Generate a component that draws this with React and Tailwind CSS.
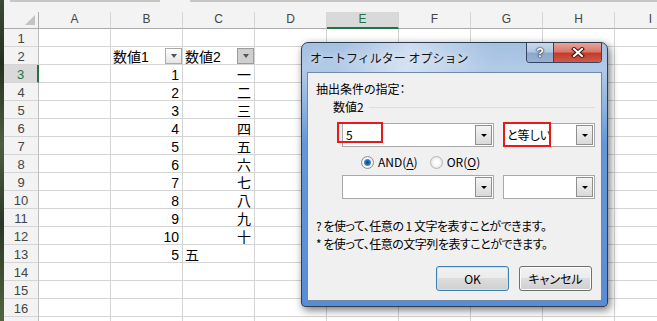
import React from 'react';

const COLS = ['A', 'B', 'C', 'D', 'E', 'F', 'G', 'H', 'I'];

// values in columns B and C, keyed by row number
const DATA = {
  2: ['数値1', '数値2'],
  3: ['1', '一'],
  4: ['2', '二'],
  5: ['3', '三'],
  6: ['4', '四'],
  7: ['5', '五'],
  8: ['6', '六'],
  9: ['7', '七'],
  10: ['8', '八'],
  11: ['9', '九'],
  12: ['10', '十'],
  13: ['5', '五'],
};

const ROWS = Array.from({ length: 17 }, (_, i) => i + 1);

const FilterButton = ({ active = false }) => (
  <span
    className={`absolute right-0 top-[1px] w-[17px] h-[16px] border flex items-center justify-center ${
      active
        ? 'bg-[#cfcfcf] border-[#9c9c9c]'
        : 'bg-[linear-gradient(#ffffff,#e4e4e4)] border-[#ababab]'
    }`}
  >
    <span className="w-0 h-0 border-l-[3px] border-r-[3px] border-t-[4px] border-l-transparent border-r-transparent border-t-[#555555]" />
  </span>
);

const SheetCell = ({ row, col }) => {
  const values = DATA[row];
  let content = null;

  if (values && (col === 'B' || col === 'C')) {
    const text = col === 'B' ? values[0] : values[1];
    const isHeader = row === 2;
    const leftAligned = isHeader || (row === 13 && col === 'C');
    content = (
      <>
        <span
          className={`block leading-[17px] pt-[2px] whitespace-nowrap ${
            leftAligned ? 'pl-[2px] text-left' : 'pr-[3px] text-right'
          }`}
        >
          {text}
        </span>
        {isHeader && <FilterButton active={col === 'C'} />}
      </>
    );
  }

  return (
    <div className="relative w-[72px] h-[18px] shrink-0 border-r border-b border-[#d4d4d4] text-[14px] text-black">
      {content}
    </div>
  );
};

const Sheet = () => (
  <div className="flex-1 flex flex-col bg-white font-['Liberation_Sans','Noto_Sans_CJK_JP',sans-serif] overflow-hidden">
    {/* bottom edge of the formula bar */}
    <div className="h-[12px] shrink-0 bg-[#f3f3f3]">
      <div className="flex h-[2px]">
        <div className="w-[6px]" />
        <div className="w-[150px] bg-[#c6c6c6]" />
        <div className="w-[30px]" />
        <div className="flex-1 bg-[#c6c6c6]" />
      </div>
    </div>

    {/* column headers */}
    <div className="flex h-[17px] shrink-0 bg-[#f3f3f3]">
      <div className="relative w-[35px] shrink-0 border-r border-b border-[#ababab]">
        <svg className="absolute right-[3px] bottom-[3px]" width="10" height="10" viewBox="0 0 10 10">
          <polygon points="10,0 10,10 0,10" fill="#c3c3c3" />
        </svg>
      </div>
      {COLS.map((c) => (
        <div
          key={c}
          className={`w-[72px] shrink-0 border-r border-[#d5d5d5] text-center text-[12px] leading-[15px] ${
            c === 'E'
              ? 'bg-[#d9d9d9] text-[#217346] border-b-2 border-b-[#217346]'
              : 'text-[#444444] border-b border-b-[#ababab]'
          }`}
        >
          {c}
        </div>
      ))}
    </div>

    {ROWS.map((r) => (
      <div key={r} className="flex h-[18px] shrink-0">
        <div
          className={`w-[35px] shrink-0 border-b border-b-[#d4d4d4] text-center text-[13px] leading-[17px] pt-[1px] ${
            r === 3
              ? 'bg-[#d9d9d9] text-[#217346] border-r-2 border-r-[#217346]'
              : 'bg-[#f3f3f3] text-[#444444] border-r border-r-[#bdbdbd]'
          }`}
        >
          {r < 17 ? r : ''}
        </div>
        {COLS.map((c) => (
          <SheetCell key={c} row={r} col={c} />
        ))}
      </div>
    ))}
  </div>
);

const Combo = ({ width, value }) => (
  <div
    className="h-[24px] border border-[#a9a9a9] bg-white flex items-stretch p-[1px] shrink-0"
    style={{ width }}
  >
    <span className="flex-1 pl-[2px] text-[12px] leading-[20px] text-black whitespace-nowrap overflow-hidden">
      {value}
    </span>
    <span className="w-[17px] border border-[#8f8f8f] bg-[linear-gradient(#f4f4f4,#d9d9d9)] flex items-center justify-center">
      <span className="w-0 h-0 border-l-[3px] border-r-[3px] border-t-[3px] border-l-transparent border-r-transparent border-t-black" />
    </span>
  </div>
);

const Radio = ({ checked, label, hotkey }) => (
  <div className="flex items-center gap-[4px]">
    <span
      className={`w-[13px] h-[13px] rounded-full border flex items-center justify-center ${
        checked
          ? 'border-[#8e8f8f] bg-[radial-gradient(circle,#ffffff_40%,#dcdcdc_100%)]'
          : 'border-[#b5b5b5] bg-[radial-gradient(circle,#fdfdfd_30%,#d8d8d8_100%)]'
      }`}
    >
      {checked && (
        <span className="w-[7px] h-[7px] rounded-full bg-[radial-gradient(circle,#1b4f8f_20%,#3c86cc_60%,#8fc6ef_100%)]" />
      )}
    </span>
    <span className="text-[12px] leading-[16px] text-black">
      {label}(<span className="underline underline-offset-[2px]">{hotkey}</span>)
    </span>
  </div>
);

const WinButton = ({ children, isDefault = false }) => (
  <div
    className={`w-[73px] h-[25px] rounded-[3px] border flex items-center justify-center text-[12px] text-black [background-image:linear-gradient(#f2f2f2_0%,#ebebeb_50%,#dddddd_50%,#cfcfcf_100%)] ${
      isDefault
        ? 'border-[#3c7fb1] shadow-[inset_0_0_0_1px_#bfe6f8]'
        : 'border-[#707070] shadow-[inset_0_0_0_1px_#fbfbfb]'
    }`}
  >
    {children}
  </div>
);

const TitleButtons = () => (
  <div className="mr-[5px] flex h-[20px] border border-t-0 border-[#34465f] rounded-b-[4px] overflow-hidden">
    <div className="w-[27px] flex items-center justify-center bg-[linear-gradient(#cad9ec_0%,#b3c8e2_45%,#8ea8c9_55%,#97b1d2_100%)] border-r border-[#34465f]">
      <span className="text-white font-bold text-[13px] leading-none font-['Liberation_Sans',sans-serif] [text-shadow:0_0_1px_#1c2a40,0_0_1px_#1c2a40,0_0_2px_#1c2a40]">
        ?
      </span>
    </div>
    <div className="w-[47px] flex items-center justify-center bg-[linear-gradient(#e8a59b_0%,#d9786b_45%,#c43c2c_55%,#cf5a45_100%)]">
      <svg width="14" height="11" viewBox="0 0 14 11">
        <path d="M3 2 L11 9 M11 2 L3 9" stroke="#3a1410" strokeWidth="4" strokeLinecap="square" />
        <path d="M3 2 L11 9 M11 2 L3 9" stroke="#ffffff" strokeWidth="2" strokeLinecap="square" />
      </svg>
    </div>
  </div>
);

const FilterDialog = () => (
  <div className="absolute left-[301px] top-[42px] w-[307px] h-[265px] rounded-t-[7px] rounded-b-[4px] border border-[#2f3d52] shadow-[2px_3px_8px_rgba(0,0,0,0.55)] flex flex-col font-['Noto_Sans_CJK_JP',sans-serif] [background:linear-gradient(100deg,rgba(255,255,255,0)_12%,rgba(255,255,255,0.45)_35%,rgba(255,255,255,0)_62%)_0_0/100%_30px_no-repeat,linear-gradient(180deg,#a4bfe1_0px,#b2cae8_25px,#93b5e1_60px,#6597d8_100px,#5a8cd3_100%)]">
    <div className="h-[29px] flex items-start justify-between shrink-0">
      <span className="pl-[8px] mt-[7px] text-[12px] leading-[16px] text-[#111111] whitespace-nowrap [text-shadow:0_0_6px_#ffffff]">
        オートフィルター オプション
      </span>
      <TitleButtons />
    </div>

    <div className="relative mx-[5px] h-[229px] border border-[#6f89ad] bg-[#f0f0f0] flex flex-col text-[12px] leading-[16px] text-black [font-feature-settings:'palt']">
      <div className="mt-[8px] h-[16px] pl-[8px] whitespace-nowrap">抽出条件の指定：</div>

      <div className="mt-[2px] h-[16px] pl-[25px] pr-[6px] flex items-center gap-[5px]">
        <span className="whitespace-nowrap">数値2</span>
        <span className="flex-1 h-px bg-[#d5dfe5]" />
      </div>

      <div className="mt-[8px] pl-[34px] flex gap-[9px]">
        <Combo width={152} value="5" />
        <Combo width={92} value="と等しい" />
      </div>

      <div className="mt-[7px] h-[16px] pl-[53px] flex items-center gap-[12px]">
        <Radio checked label="AND" hotkey="A" />
        <Radio label="OR" hotkey="O" />
      </div>

      <div className="mt-[5px] pl-[34px] flex gap-[9px]">
        <Combo width={152} value="" />
        <Combo width={92} value="" />
      </div>

      <div className="mt-[19px] h-[16px] pl-[8px] whitespace-nowrap tracking-[-0.5px]">? を使って、任意の 1 文字を表すことができます。</div>
      <div className="mt-[2px] h-[16px] pl-[8px] whitespace-nowrap tracking-[-0.5px]">* を使って、任意の文字列を表すことができます。</div>

      <div className="mt-[14px] pr-[9px] flex justify-end gap-[10px]">
        <WinButton isDefault>OK</WinButton>
        <WinButton>キャンセル</WinButton>
      </div>

      {/* red highlight boxes drawn over the screenshot */}
      <div className="absolute left-[29px] top-[49px] w-[46px] h-[21px] border-2 border-[#e8191a]" />
      <div className="absolute left-[195px] top-[49px] w-[48px] h-[25px] border-2 border-[#e8191a]" />
    </div>
  </div>
);

export default function App() {
  return (
    <div className="relative w-[657px] h-[321px] overflow-hidden flex bg-white">
      <div className="w-[4px] shrink-0 bg-[linear-gradient(180deg,#3b4a35_0%,#24301f_20%,#4d5f40_45%,#2a3626_70%,#52643f_100%)]" />
      <Sheet />
      <FilterDialog />
    </div>
  );
}
